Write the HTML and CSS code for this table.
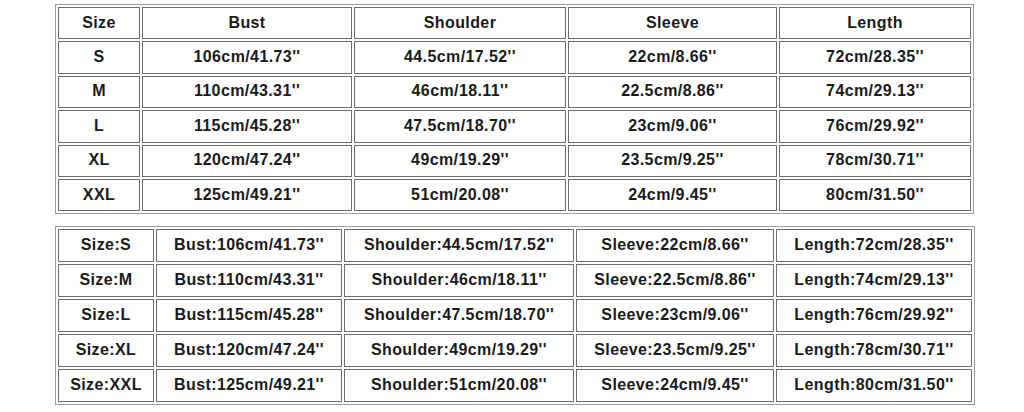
FILE: index.html
```html
<!DOCTYPE html>
<html>
<head>
<meta charset="utf-8">
<link rel="stylesheet" href="styles.css">
</head>
<body>
<div class="wrap">
  <table class="chart chart-a">
    <colgroup><col class="a1"><col class="a2"><col class="a3"><col class="a4"><col class="a5"></colgroup>
    <tr><td>Size</td><td>Bust</td><td>Shoulder</td><td>Sleeve</td><td>Length</td></tr>
    <tr><td>S</td><td>106cm/41.73''</td><td>44.5cm/17.52''</td><td>22cm/8.66''</td><td>72cm/28.35''</td></tr>
    <tr><td>M</td><td>110cm/43.31''</td><td>46cm/18.11''</td><td>22.5cm/8.86''</td><td>74cm/29.13''</td></tr>
    <tr><td>L</td><td>115cm/45.28''</td><td>47.5cm/18.70''</td><td>23cm/9.06''</td><td>76cm/29.92''</td></tr>
    <tr><td>XL</td><td>120cm/47.24''</td><td>49cm/19.29''</td><td>23.5cm/9.25''</td><td>78cm/30.71''</td></tr>
    <tr><td>XXL</td><td>125cm/49.21''</td><td>51cm/20.08''</td><td>24cm/9.45''</td><td>80cm/31.50''</td></tr>
  </table>
  <table class="chart chart-b">
    <colgroup><col class="b1"><col class="b2"><col class="b3"><col class="b4"><col class="b5"></colgroup>
    <tr><td>Size:S</td><td>Bust:106cm/41.73''</td><td>Shoulder:44.5cm/17.52''</td><td>Sleeve:22cm/8.66''</td><td>Length:72cm/28.35''</td></tr>
    <tr><td>Size:M</td><td>Bust:110cm/43.31''</td><td>Shoulder:46cm/18.11''</td><td>Sleeve:22.5cm/8.86''</td><td>Length:74cm/29.13''</td></tr>
    <tr><td>Size:L</td><td>Bust:115cm/45.28''</td><td>Shoulder:47.5cm/18.70''</td><td>Sleeve:23cm/9.06''</td><td>Length:76cm/29.92''</td></tr>
    <tr><td>Size:XL</td><td>Bust:120cm/47.24''</td><td>Shoulder:49cm/19.29''</td><td>Sleeve:23.5cm/9.25''</td><td>Length:78cm/30.71''</td></tr>
    <tr><td>Size:XXL</td><td>Bust:125cm/49.21''</td><td>Shoulder:51cm/20.08''</td><td>Sleeve:24cm/9.45''</td><td>Length:80cm/31.50''</td></tr>
  </table>
</div>
</body>
</html>
```
FILE: styles.css
```css
html, body {
  margin: 0;
  padding: 0;
  background: #ffffff;
}
.wrap {
  padding: 4px 0 0 55px;
  display: flex;
  flex-direction: column;
  align-items: flex-start;
  gap: 12px;
}
.chart {
  border-collapse: separate;
  border-spacing: 2px;
  border: 1px solid #9a9a9a;
  table-layout: fixed;
  font-family: "Liberation Sans", Arial, sans-serif;
  font-weight: bold;
  font-size: 16px;
  letter-spacing: 0.4px;
  color: #1a1a1a;
}
.chart td {
  border: 1px solid #6e6e6e;
  box-sizing: border-box;
  padding: 0 0 1px 0;
  text-align: center;
  vertical-align: middle;
  white-space: nowrap;
}
.chart-a { width: 919px; }
.chart-a td { height: 32.4px; }
.chart-b { width: 920px; }
.chart-b td { height: 33px; }
.a1 { width: 82px; }
.a2 { width: 210px; }
.a3 { width: 212px; }
.a4 { width: 209px; }
.a5 { width: 192px; }
.b1 { width: 96px; }
.b2 { width: 186px; }
.b3 { width: 230px; }
.b4 { width: 198px; }
.b5 { width: 196px; }
```
